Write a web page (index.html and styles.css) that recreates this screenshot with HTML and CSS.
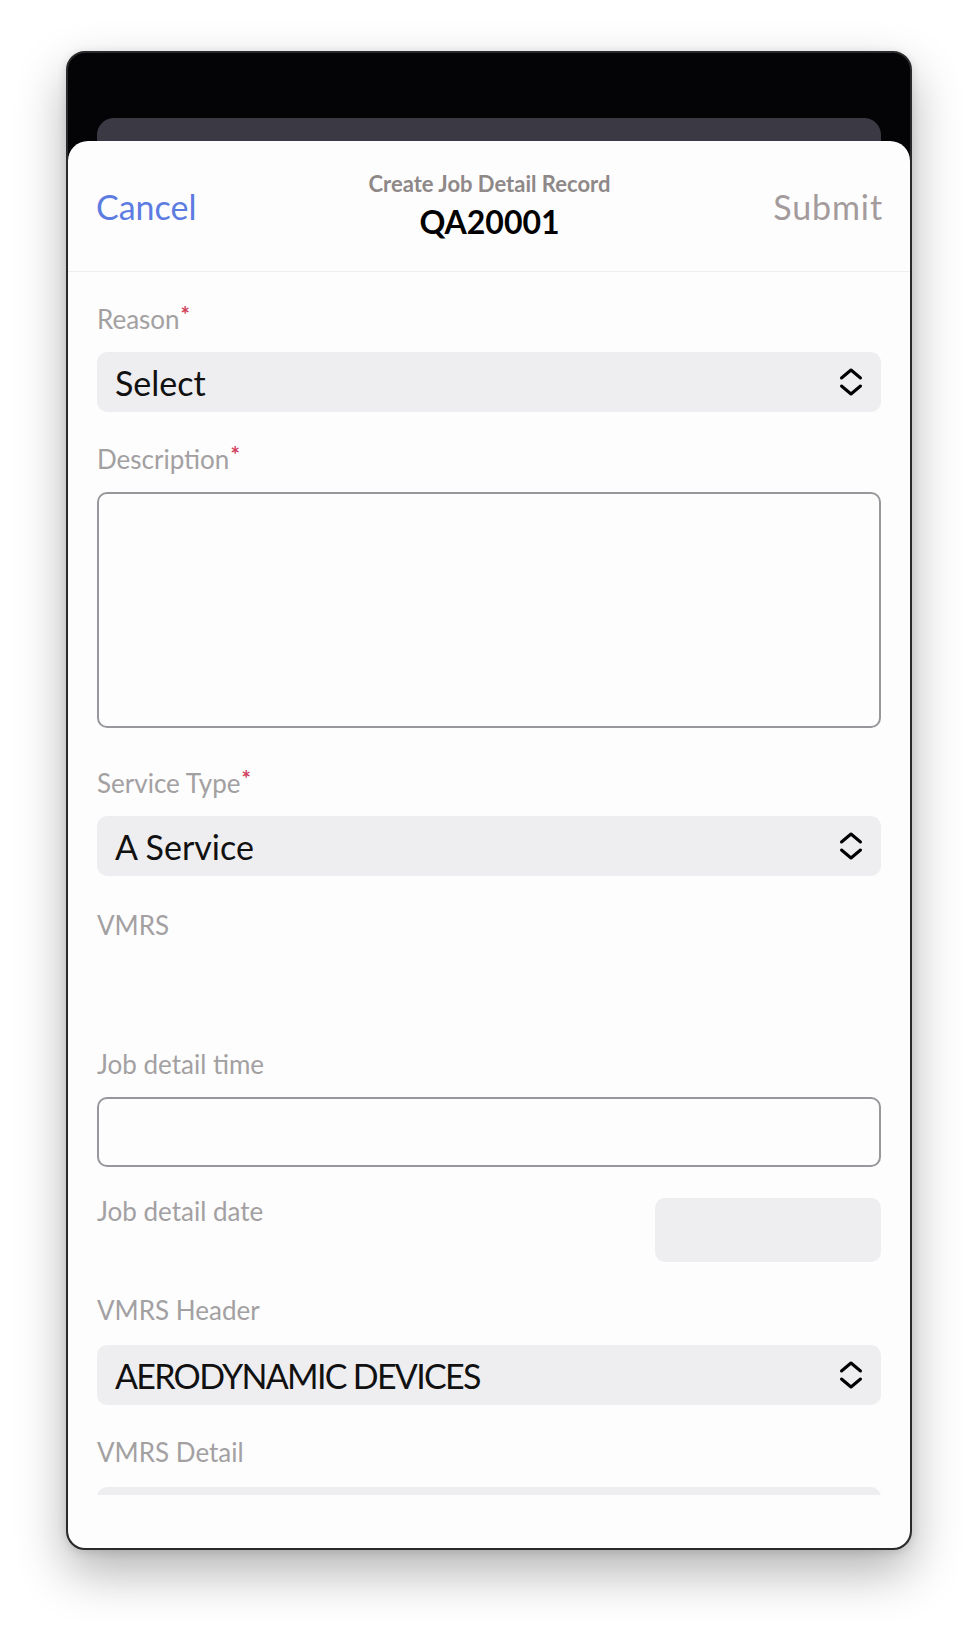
FILE: index.html
```html
<!DOCTYPE html>
<html lang="en">
<head>
<meta charset="utf-8">
<title>Create Job Detail Record</title>
<link rel="stylesheet" href="styles.css">
</head>
<body>
<div class="device">
  <div class="backcard"></div>
  <div class="sheet">
    <header class="sheet-header">
      <span class="nav-btn nav-cancel">Cancel</span>
      <div class="title-block">
        <div class="title-sub">Create Job Detail Record</div>
        <div class="title-main">QA20001</div>
      </div>
      <span class="nav-btn nav-submit">Submit</span>
    </header>
    <div class="form">
      <div class="field field-first">
        <div class="field-label">Reason<span class="req">*</span></div>
        <div class="select"><span>Select</span>
          <svg class="chev" width="24" height="28" viewBox="0 0 24 28"><path d="M2.5 10 L12 2 L21.5 10 M2.5 18 L12 26 L21.5 18" fill="none" stroke="#000" stroke-width="3" stroke-linecap="round" stroke-linejoin="round"/></svg>
        </div>
      </div>
      <div class="field field-textarea">
        <div class="field-label">Description<span class="req">*</span></div>
        <div class="textarea"></div>
      </div>
      <div class="field">
        <div class="field-label">Service Type<span class="req">*</span></div>
        <div class="select"><span>A Service</span>
          <svg class="chev" width="24" height="28" viewBox="0 0 24 28"><path d="M2.5 10 L12 2 L21.5 10 M2.5 18 L12 26 L21.5 18" fill="none" stroke="#000" stroke-width="3" stroke-linecap="round" stroke-linejoin="round"/></svg>
        </div>
      </div>
      <div class="field">
        <div class="field-label">VMRS</div>
        <div class="empty-control"></div>
      </div>
      <div class="field field-tight">
        <div class="field-label">Job detail time</div>
        <div class="text-input"></div>
      </div>
      <div class="field field-row">
        <div class="field-label">Job detail date</div>
        <div class="date-box"></div>
      </div>
      <div class="field field-loose">
        <div class="field-label">VMRS Header</div>
        <div class="select"><span class="value-caps">AERODYNAMIC DEVICES</span>
          <svg class="chev" width="24" height="28" viewBox="0 0 24 28"><path d="M2.5 10 L12 2 L21.5 10 M2.5 18 L12 26 L21.5 18" fill="none" stroke="#000" stroke-width="3" stroke-linecap="round" stroke-linejoin="round"/></svg>
        </div>
      </div>
      <div class="field field-loose">
        <div class="field-label">VMRS Detail</div>
        <div class="select"></div>
      </div>
    </div>
    <div class="sheet-footer"></div>
  </div>
</div>
</body>
</html>
```
FILE: styles.css
```css
* { box-sizing: border-box; }

html, body {
  margin: 0;
  padding: 0;
  background: #ffffff;
}

body {
  font-family: "Lato", "Liberation Sans", sans-serif;
  padding-top: 51px;
  min-height: 1634px;
}

.device {
  width: 846px;
  height: 1499px;
  margin: 0 auto;
  background: #040306;
  border: 2px solid #2a2a2c;
  border-radius: 19px;
  overflow: hidden;
  display: flex;
  flex-direction: column;
  box-shadow: 0 22px 50px rgba(0, 0, 0, 0.30), 0 2px 10px rgba(0, 0, 0, 0.12);
}

.backcard {
  height: 23px;
  margin: 65px 29px 0;
  background: #3b3944;
  border-radius: 17px 17px 0 0;
  flex: none;
}

.sheet {
  flex: 1;
  background: #fdfdfd;
  border-radius: 20px 20px 0 0;
  display: flex;
  flex-direction: column;
  overflow: hidden;
}

.sheet-header {
  height: 131px;
  flex: none;
  border-bottom: 1px solid #efefef;
  display: grid;
  grid-template-columns: 1fr auto 1fr;
  align-items: center;
  padding: 0 27px 0 28px;
}

.nav-btn {
  font-size: 34px;
  line-height: 40px;
  margin-top: 2px;
}

.nav-cancel { color: #5d7ce2; justify-self: start; }
.nav-submit { color: #a39b9c; letter-spacing: 0.9px; justify-self: end; }

.title-block {
  text-align: center;
}

.title-sub {
  font-size: 22px;
  line-height: 24px;
  font-weight: 700;
  color: #8e8888;
  margin-bottom: 7px;
}

.title-main {
  font-size: 32px;
  line-height: 38px;
  font-weight: 700;
  color: #000;
}

.form {
  height: 1223px;
  flex: none;
  overflow: hidden;
  padding: 31px 29px 0;
  display: flex;
  flex-direction: column;
}

.field {
  margin-bottom: 33px;
  flex: none;
}

.field-first { margin-bottom: 31px; }
.field-textarea { margin-bottom: 39px; }
.field-tight { margin-bottom: 28px; }
.field-loose { margin-bottom: 31px; }
.field-loose .field-label { margin-bottom: 19px; }

.field-label {
  font-size: 26px;
  line-height: 32px;
  color: #a3a0a2;
  margin-bottom: 17px;
}

.req {
  color: #d0405a;
  font-size: 22px;
  font-weight: 700;
  line-height: 0;
  vertical-align: 6px;
  margin-left: 1px;
}

.select {
  height: 60px;
  background: #eeedf0;
  border-radius: 10px;
  display: flex;
  align-items: center;
  justify-content: space-between;
  padding: 0 18px 0 18px;
  font-size: 34px;
  color: #111;
}

.value-caps { letter-spacing: -1.7px; }

.chev { display: block; }

.textarea {
  height: 236px;
  border: 2px solid #98979c;
  border-radius: 10px;
  background: #fdfdfd;
}

.empty-control {
  height: 57px;
}

.text-input {
  height: 70px;
  border: 2px solid #98979c;
  border-radius: 10px;
  background: #fdfdfd;
}

.field-row {
  display: flex;
  justify-content: space-between;
  align-items: flex-start;
  margin-bottom: 32px;
}

.field-row .field-label { margin-bottom: 0; }

.date-box {
  width: 226px;
  height: 64px;
  margin-top: 3px;
  background: #eeedf0;
  border-radius: 10px;
}

.sheet-footer {
  flex: 1;
}
```
